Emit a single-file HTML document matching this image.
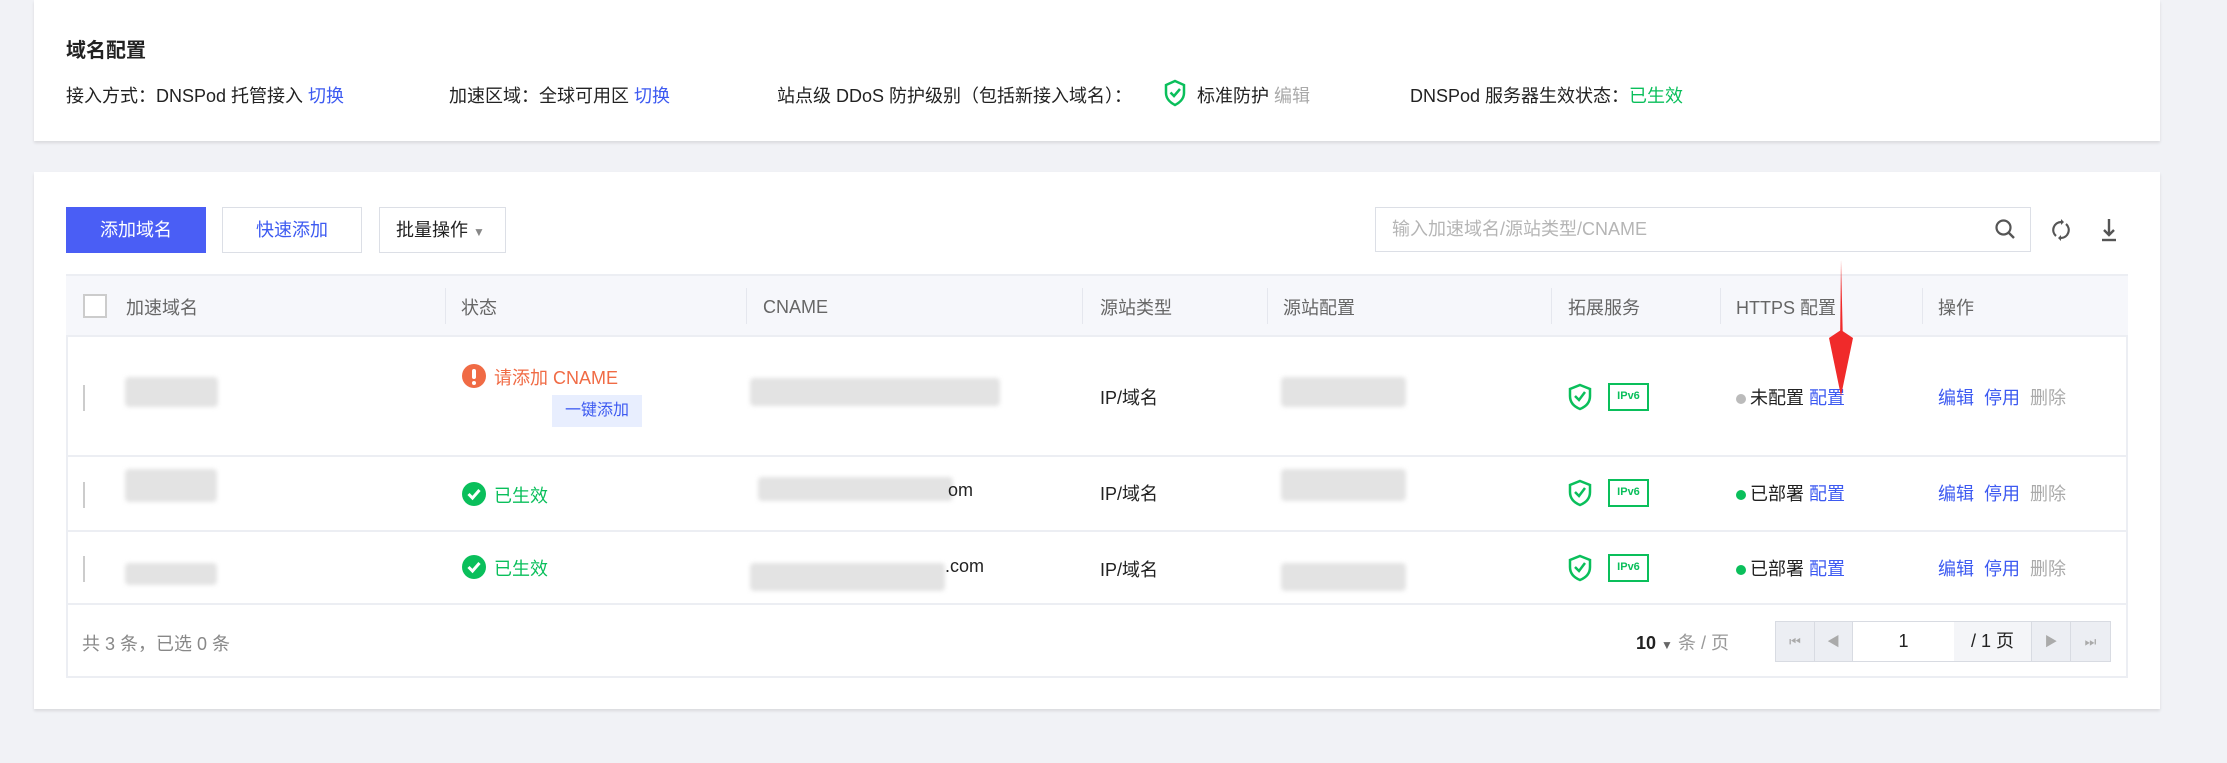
<!DOCTYPE html>
<html><head><meta charset="utf-8"><style>
*{margin:0;padding:0;box-sizing:border-box}
body{width:2227px;height:763px;background:#f1f2f6;font-family:"Liberation Sans","Noto Sans CJK SC",sans-serif;font-size:18px;color:#222;position:relative;overflow:hidden}
.a{position:absolute;white-space:nowrap}
.card{position:absolute;background:#fff;box-shadow:0 2px 3px rgba(0,0,0,.1)}
.l{color:#3d5af1}.g{color:#0abf5b}.gr{color:#aaa}
.blur{position:absolute;background:#e3e3e3;border-radius:4px;filter:blur(2px)}
.th{color:#666}
.vd{position:absolute;top:288px;width:1px;height:36px;background:#e5e7ee}
.hl{position:absolute;left:66px;width:2062px;height:2px;background:#eceef3}
</style></head><body>
<div class="card" style="left:34px;top:0;width:2126px;height:141px"></div>
<div class="a" style="left:66px;top:34px;font-size:20px;font-weight:bold">域名配置</div>
<div class="a" style="left:66px;top:82px">接入方式：DNSPod 托管接入 <span class="l">切换</span></div>
<div class="a" style="left:449px;top:82px">加速区域：全球可用区 <span class="l">切换</span></div>
<div class="a" style="left:777px;top:82px">站点级 DDoS 防护级别（包括新接入域名）：</div>
<svg class="a" style="left:1163px;top:79px" width="24" height="28" viewBox="0 0 24 28"><path d="M12 2 L21 6 V14 C21 20 16 24 12 26 C8 24 3 20 3 14 V6 Z" fill="none" stroke="#0abf5b" stroke-width="2.5"/><path d="M7.5 13.5 L11 17 L17 10" fill="none" stroke="#0abf5b" stroke-width="2.5"/></svg>
<div class="a" style="left:1197px;top:82px">标准防护 <span class="gr">编辑</span></div>
<div class="a" style="left:1410px;top:82px">DNSPod 服务器生效状态：<span class="g">已生效</span></div>

<div class="card" style="left:34px;top:172px;width:2126px;height:537px"></div>
<div class="a" style="left:66px;top:207px;width:140px;height:46px;background:#4a5ef5;color:#fff;text-align:center;line-height:46px">添加域名</div>
<div class="a" style="left:222px;top:207px;width:140px;height:46px;border:1px solid #dcdfe6;color:#3d5af1;text-align:center;line-height:44px">快速添加</div>
<div class="a" style="left:379px;top:207px;width:127px;height:46px;border:1px solid #dcdfe6;line-height:44px;padding-left:16px">批量操作 <span style="font-size:12px;color:#888">▼</span></div>
<div class="a" style="left:1375px;top:207px;width:656px;height:45px;border:1px solid #dcdfe6;color:#b5b5b5;line-height:43px;padding-left:16px">输入加速域名/源站类型/CNAME</div>
<svg class="a" style="left:1994px;top:218px" width="22" height="22" viewBox="0 0 22 22"><circle cx="9.5" cy="9.5" r="7" fill="none" stroke="#555" stroke-width="2.2"/><path d="M14.5 14.5 L20 20" stroke="#555" stroke-width="2.4"/></svg>
<svg class="a" style="left:2052px;top:218px" width="18" height="24" viewBox="0 0 18 24"><path d="M9 4 A8 8 0 0 0 4 18 M9 20 A8 8 0 0 0 14 6" fill="none" stroke="#555" stroke-width="2.2"/><path d="M9 1 L12 4 L9 7Z M9 17 L6 20 L9 23Z" fill="#555"/></svg>
<svg class="a" style="left:2100px;top:217px" width="18" height="26" viewBox="0 0 18 26"><path d="M9 2 V18 M4 13 L9 18 L14 13" fill="none" stroke="#555" stroke-width="2.4"/><path d="M2 23 H16" stroke="#555" stroke-width="2.4"/></svg>

<div class="a" style="left:66px;top:274px;width:2062px;height:404px;border:2px solid #eceef3;border-top:0"></div>
<div class="a" style="left:66px;top:274px;width:2062px;height:63px;background:#f6f7fb;border-top:2px solid #eceef3;border-bottom:2px solid #eceef3"></div>
<div class="a" style="left:83px;top:294px;width:24px;height:24px;border:2px solid #ccc;background:#fff"></div>
<div class="a th" style="left:126px;top:294px">加速域名</div>
<div class="vd" style="left:445px"></div><div class="a th" style="left:461px;top:294px">状态</div>
<div class="vd" style="left:746px"></div><div class="a th" style="left:763px;top:297px">CNAME</div>
<div class="vd" style="left:1082px"></div><div class="a th" style="left:1100px;top:294px">源站类型</div>
<div class="vd" style="left:1267px"></div><div class="a th" style="left:1283px;top:294px">源站配置</div>
<div class="vd" style="left:1551px"></div><div class="a th" style="left:1568px;top:294px">拓展服务</div>
<div class="vd" style="left:1720px"></div><div class="a th" style="left:1736px;top:294px">HTTPS 配置</div>
<div class="vd" style="left:1922px"></div><div class="a th" style="left:1938px;top:294px">操作</div>

<div class="hl" style="top:455px"></div><div class="hl" style="top:530px"></div><div class="hl" style="top:603px"></div>

<div class="a" style="left:83px;top:385px;width:4px;height:26px;border-left:2px solid #ccc"></div>
<div class="blur" style="left:125px;top:377px;width:93px;height:30px"></div>
<svg class="a" style="left:461px;top:363px" width="26" height="26"><circle cx="13" cy="13" r="12" fill="#f06b45"/><rect x="11" y="6" width="4" height="10" rx="2" fill="#fff"/><circle cx="13" cy="20" r="2" fill="#fff"/></svg>
<div class="a" style="left:494px;top:364px;color:#f06b45">请添加 CNAME</div>
<div class="a" style="left:552px;top:395px;width:90px;height:32px;background:#e8eefe;color:#3d5af1;font-size:16px;text-align:center;line-height:32px">一键添加</div>
<div class="blur" style="left:750px;top:378px;width:250px;height:28px"></div>
<div class="a" style="left:1100px;top:384px">IP/域名</div>
<div class="blur" style="left:1281px;top:377px;width:125px;height:30px"></div>

<div class="a" style="left:83px;top:482px;width:4px;height:26px;border-left:2px solid #ccc"></div>
<div class="blur" style="left:125px;top:469px;width:92px;height:33px"></div>
<div class="blur" style="left:758px;top:477px;width:195px;height:24px"></div>
<div class="a" style="left:948px;top:480px">om</div>
<div class="a" style="left:1100px;top:480px">IP/域名</div>
<div class="blur" style="left:1281px;top:469px;width:125px;height:32px"></div>

<div class="a" style="left:83px;top:556px;width:4px;height:26px;border-left:2px solid #ccc"></div>
<div class="blur" style="left:125px;top:563px;width:92px;height:22px"></div>
<div class="blur" style="left:750px;top:563px;width:195px;height:28px"></div>
<div class="a" style="left:945px;top:556px">.com</div>
<div class="a" style="left:1100px;top:556px">IP/域名</div>
<div class="blur" style="left:1281px;top:563px;width:125px;height:28px"></div>

<svg class="a" style="left:461px;top:481px" width="26" height="26"><circle cx="13" cy="13" r="12" fill="#0abf5b"/><path d="M7.5 13 L11.5 17 L18.5 9" fill="none" stroke="#fff" stroke-width="3"/></svg>
<div class="a g" style="left:494px;top:482px">已生效</div>
<svg class="a" style="left:461px;top:554px" width="26" height="26"><circle cx="13" cy="13" r="12" fill="#0abf5b"/><path d="M7.5 13 L11.5 17 L18.5 9" fill="none" stroke="#fff" stroke-width="3"/></svg>
<div class="a g" style="left:494px;top:555px">已生效</div>

<div class="a" style="left:1567px;top:383px;width:360px;height:30px">
<svg class="a" style="left:0;top:0" width="26" height="28" viewBox="0 0 26 28"><path d="M13 2 L23 6 V13 C23 20 18 24 13 26 C8 24 3 20 3 13 V6 Z" fill="none" stroke="#0abf5b" stroke-width="2.5"/><path d="M8 13 L12 17 L18 9" fill="none" stroke="#0abf5b" stroke-width="2.5"/></svg>
<div class="a" style="left:41px;top:0;width:41px;height:28px;border:2.5px solid #0abf5b;color:#0abf5b;font-size:11px;font-weight:bold;text-align:center;line-height:23px">IPv6</div>
</div>
<div class="a" style="left:1567px;top:479px;width:100px;height:30px">
<svg class="a" style="left:0;top:0" width="26" height="28" viewBox="0 0 26 28"><path d="M13 2 L23 6 V13 C23 20 18 24 13 26 C8 24 3 20 3 13 V6 Z" fill="none" stroke="#0abf5b" stroke-width="2.5"/><path d="M8 13 L12 17 L18 9" fill="none" stroke="#0abf5b" stroke-width="2.5"/></svg>
<div class="a" style="left:41px;top:0;width:41px;height:28px;border:2.5px solid #0abf5b;color:#0abf5b;font-size:11px;font-weight:bold;text-align:center;line-height:23px">IPv6</div>
</div>
<div class="a" style="left:1567px;top:554px;width:100px;height:30px">
<svg class="a" style="left:0;top:0" width="26" height="28" viewBox="0 0 26 28"><path d="M13 2 L23 6 V13 C23 20 18 24 13 26 C8 24 3 20 3 13 V6 Z" fill="none" stroke="#0abf5b" stroke-width="2.5"/><path d="M8 13 L12 17 L18 9" fill="none" stroke="#0abf5b" stroke-width="2.5"/></svg>
<div class="a" style="left:41px;top:0;width:41px;height:28px;border:2.5px solid #0abf5b;color:#0abf5b;font-size:11px;font-weight:bold;text-align:center;line-height:23px">IPv6</div>
</div>

<div class="a" style="left:1736px;top:384px"><span style="display:inline-block;width:10px;height:10px;border-radius:5px;background:#bbb;vertical-align:middle;margin-right:4px"></span>未配置 <span class="l">配置</span></div>
<div class="a" style="left:1736px;top:480px"><span style="display:inline-block;width:10px;height:10px;border-radius:5px;background:#0abf5b;vertical-align:middle;margin-right:4px"></span>已部署 <span class="l">配置</span></div>
<div class="a" style="left:1736px;top:555px"><span style="display:inline-block;width:10px;height:10px;border-radius:5px;background:#0abf5b;vertical-align:middle;margin-right:4px"></span>已部署 <span class="l">配置</span></div>
<div class="a" style="left:1938px;top:384px"><span class="l">编辑</span>&nbsp; <span class="l">停用</span>&nbsp; <span class="gr">删除</span></div>
<div class="a" style="left:1938px;top:480px"><span class="l">编辑</span>&nbsp; <span class="l">停用</span>&nbsp; <span class="gr">删除</span></div>
<div class="a" style="left:1938px;top:555px"><span class="l">编辑</span>&nbsp; <span class="l">停用</span>&nbsp; <span class="gr">删除</span></div>

<svg class="a" style="left:1826px;top:260px" width="30" height="140" viewBox="0 0 30 140"><path d="M15 0 L17 85 L14 85 Z" fill="#f02a2a"/><path d="M15 70 L18 72 L27 78 L15 136 L3 78 L12 72 Z" fill="#f02a2a"/></svg>

<div class="a" style="left:82px;top:630px;color:#888">共 3 条，已选 0 条</div>
<div class="a" style="left:1636px;top:629px;font-weight:bold">10 <span style="font-size:12px;color:#666;font-weight:normal">▼</span> <span style="color:#999;font-weight:normal">条 / 页</span></div>
<div class="a" style="left:1775px;top:621px;width:336px;height:41px;border:1px solid #d8dbe2;background:#eceef3;display:flex;color:#aaa;font-size:13px">
<div style="width:39px;border-right:1px solid #d8dbe2;text-align:center;line-height:39px">⏮</div>
<div style="width:38px;border-right:1px solid #d8dbe2;text-align:center;line-height:39px">◀</div>
<div style="width:101px;background:#fff;color:#222;font-size:18px;text-align:center;line-height:39px">1</div>
<div style="width:78px;background:#f4f5f8;border-right:1px solid #d8dbe2;color:#222;font-size:18px;text-align:center;line-height:39px">/ 1 页</div>
<div style="width:39px;border-right:1px solid #d8dbe2;text-align:center;line-height:39px">▶</div>
<div style="flex:1;text-align:center;line-height:39px">⏭</div>
</div>
</body></html>
